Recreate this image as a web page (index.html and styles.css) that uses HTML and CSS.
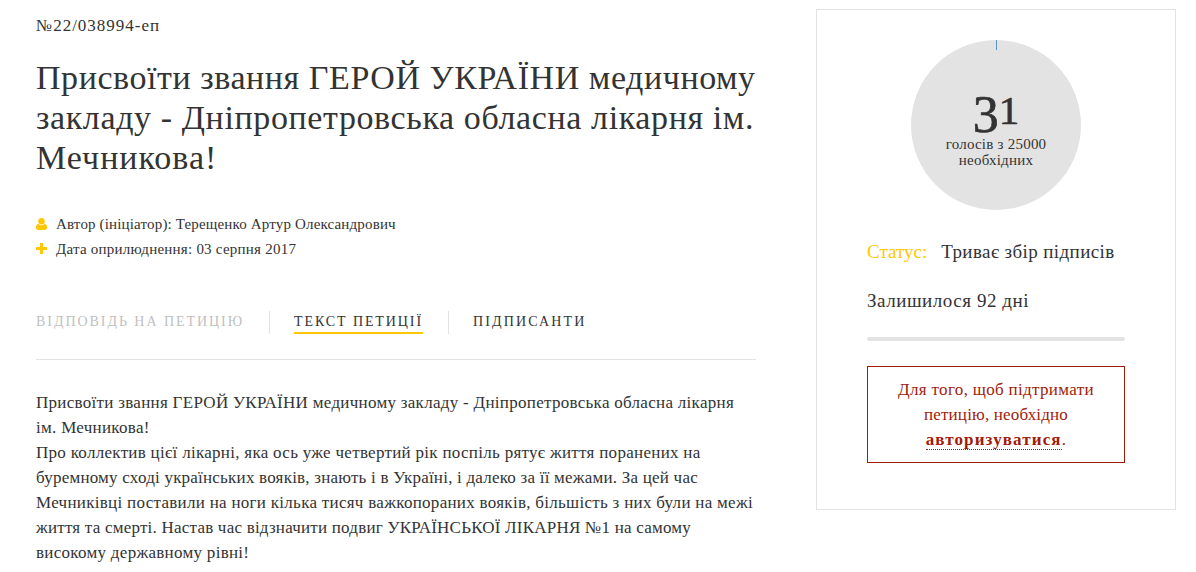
FILE: index.html
```
<!DOCTYPE html>
<html lang="uk">
<head>
  <meta charset="UTF-8">
  <meta name="viewport" content="width=device-width, initial-scale=1.0">
  <title>Петиція №22/038994-еп</title>
  <link rel="stylesheet" href="styles.css">
</head>
<body>
  <div class="page">
    <main class="petition">
      <div class="number">№22/038994-еп</div>
      <h1>Присвоїти звання ГЕРОЙ УКРАЇНИ медичному<br>
        <span class="line-2">закладу - Дніпропетровська обласна лікарня ім.</span><br>
        <span class="line-3">Мечникова!</span></h1>

      <ul class="meta">
        <li>
          <svg width="11" height="12" viewBox="0 0 11 12"><circle cx="5.5" cy="3.2" r="3.2"/><path d="M2.2 5.7C.8 6 0 7.300 0 9.600 0 11 .8 12 2 12h7c1.200 0 2-1 2-2.400 0-2.300-.8-3.600-2.200-3.900C8 6.600 6.800 7.200 5.500 7.200S3 6.600 2.200 5.700z"/></svg>
          <span>Автор (ініціатор): Терещенко Артур Олександрович</span>
        </li>
        <li>
          <svg width="11" height="12" viewBox="0 0 11 12"><path d="M4 0h3v4h4v3H7v4H4V7H0V4h4z"/></svg>
          <span class="date">Дата оприлюднення: 03 серпня 2017</span>
        </li>
      </ul>

      <nav class="tabs">
        <a class="disabled">Відповідь на петицію</a>
        <a class="active" href="#text">Текст петиції</a>
        <a class="signers" href="#signers">Підписанти</a>
      </nav>

      <div class="text" id="text">
        Присвоїти звання ГЕРОЙ УКРАЇНИ медичному закладу - Дніпропетровська обласна лікарня<br>
        ім. Мечникова!<br>
        Про коллектив цієї лікарні, яка ось уже четвертий рік поспіль рятує життя поранених на<br>
        <span class="tight">буремному сході українських вояків, знають і в Україні, і далеко за її межами. За цей час</span><br>
        Мечниківці поставили на ноги кілька тисяч важкопораних вояків, більшість з них були на межі<br>
        <span class="tight">життя та смерті. Настав час відзначити подвиг УКРАЇНСЬКОЇ ЛІКАРНЯ №1 на самому</span><br>
        високому державному рівні!
      </div>
    </main>

    <aside class="sidebar">
      <div class="votes">
        <div class="tick"></div>
        <div class="count"><span class="low">3</span><span>1</span></div>
        <div class="needed">голосів з 25000<br>необхідних</div>
      </div>
      <div class="status"><span class="label">Статус:</span><span>Триває збір підписів</span></div>
      <div class="days">Залишилося 92 дні</div>
      <div class="progress"></div>
      <div class="warning">Для того, щоб підтримати<br><span class="second">петицію, необхідно</span><br><a href="#login">авторизуватися</a>.</div>
    </aside>
  </div>
</body>
</html>
```
FILE: styles.css
```
body {
  margin: 0;
  background-color: #fff;
  color: #333;
  font-family: "Liberation Serif", serif;
  font-size: 17px;
  line-height: 25px;
  overflow: hidden;
}

.page {
  display: flex;
  align-items: flex-start;
  padding-left: 36px;
}

.petition {
  width: 720px;
  margin-right: 60px;
  padding-top: 13px;
  white-space: nowrap;
}

.number {
  letter-spacing: 0.98px;
}

h1 {
  margin: 20px 0 34px;
  font-size: 34px;
  font-weight: normal;
  line-height: 40px;
  letter-spacing: 0.56px;
}

h1 .line-2 {
  letter-spacing: 0.61px;
}

h1 .line-3 {
  letter-spacing: 1px;
}

.meta {
  list-style: none;
  margin: 0;
  padding: 0;
  font-size: 15px;
  letter-spacing: 0.16px;
}

.meta .date {
  letter-spacing: 0.24px;
}

.meta li {
  display: flex;
  align-items: center;
  gap: 9px;
}

.meta svg {
  margin-bottom: 1px;
  fill: #ffc800;
}

.tabs {
  display: flex;
  margin-top: 49px;
  padding-bottom: 25px;
  border-bottom: 1px solid #e3e3e3;
}

.tabs a {
  height: 21px;
  color: #333;
  font-size: 14px;
  line-height: 21px;
  letter-spacing: 1.95px;
  text-decoration: none;
  text-transform: uppercase;
  border-bottom: 2px solid transparent;
}

.tabs a + a {
  position: relative;
  margin-left: 49px;
}

.tabs a + a::before {
  content: "";
  position: absolute;
  top: 0;
  left: -25px;
  width: 1px;
  height: 23px;
  background-color: #e3e3e3;
}

.tabs .disabled {
  width: 209px;
  color: #bfbfbf;
}

.tabs .active {
  width: 129px;
  letter-spacing: 1.9px;
  border-bottom-color: #ffc800;
}

.tabs .signers {
  margin-left: 50px;
  letter-spacing: 2.15px;
}

.text {
  margin-top: 30px;
  letter-spacing: 0.29px;
}

.text .tight {
  letter-spacing: 0.22px;
}

.sidebar {
  box-sizing: border-box;
  width: 360px;
  height: 501px;
  margin-top: 9px;
  padding: 30px 50px 0;
  border: 1px solid #e3e3e3;
  white-space: nowrap;
}

.votes {
  position: relative;
  width: 170px;
  height: 170px;
  margin: 0 auto;
  border-radius: 50%;
  background-color: #e3e3e3;
  text-align: center;
}

.tick {
  position: absolute;
  top: 0;
  left: 85px;
  width: 1px;
  height: 10px;
  background-color: #5a93c4;
}

.count {
  display: flex;
  justify-content: center;
  align-items: flex-start;
  height: 40px;
  padding-top: 56px;
  font-size: 41px;
  line-height: 29px;
  -webkit-text-stroke: 0.7px #333;
}

.count .low {
  font-size: 52px;
  line-height: 37px;
}

.needed {
  font-size: 15px;
  line-height: 16px;
  letter-spacing: 0.23px;
}

.status,
.days {
  font-size: 19px;
  letter-spacing: 0.4px;
}

.status {
  display: flex;
  gap: 14px;
  margin-top: 29px;
}

.status .label {
  color: #ffc800;
  letter-spacing: 0;
}

.days {
  margin-top: 24px;
  letter-spacing: 0.54px;
}

.progress {
  height: 4px;
  margin-top: 24px;
  border-radius: 2px;
  background-color: #e3e3e3;
}

.warning {
  margin-top: 25px;
  padding: 10px 0;
  border: 1px solid #9f1c0b;
  color: #9f1c0b;
  text-align: center;
  letter-spacing: 0.33px;
}

.warning .second {
  letter-spacing: 0.18px;
}

.warning a {
  color: #9f1c0b;
  font-weight: bold;
  letter-spacing: 1.12px;
  text-decoration: none;
  border-bottom: 1px dotted #9f1c0b;
}
```
